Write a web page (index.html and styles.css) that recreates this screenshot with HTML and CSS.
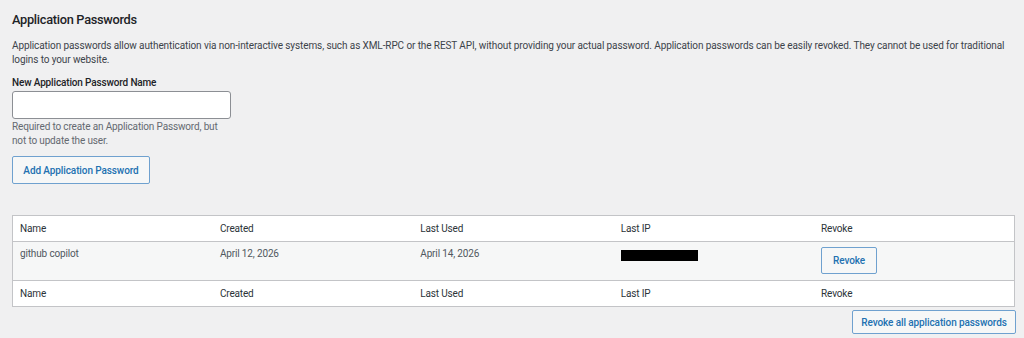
FILE: index.html
```html
<!DOCTYPE html>
<html>
<head>
<meta charset="utf-8">
<link rel="stylesheet" href="styles.css">
</head>
<body>
<div class="wrap">
  <h2 class="title">Application Passwords</h2>
  <p class="desc">Application passwords allow authentication via non-interactive systems, such as XML-RPC or the REST API, without providing your actual password. Application passwords can be easily revoked. They cannot be used for traditional logins to your website.</p>
  <div class="field">
    <label class="label">New Application Password Name</label>
    <input class="input" type="text">
    <p class="help">Required to create an Application Password, but<br>not to update the user.</p>
  </div>
  <button class="btn btn-add">Add Application Password</button>
  <table class="tbl">
    <thead>
      <tr><th>Name</th><th>Created</th><th>Last Used</th><th>Last IP</th><th>Revoke</th></tr>
    </thead>
    <tbody>
      <tr>
        <td>github copilot</td>
        <td>April 12, 2026</td>
        <td>April 14, 2026</td>
        <td><span class="redact"></span></td>
        <td><button class="btn btn-revoke">Revoke</button></td>
      </tr>
    </tbody>
    <tfoot>
      <tr><th>Name</th><th>Created</th><th>Last Used</th><th>Last IP</th><th>Revoke</th></tr>
    </tfoot>
  </table>
  <div class="actions">
    <button class="btn btn-all">Revoke all application passwords</button>
  </div>
</div>
</body>
</html>
```
FILE: styles.css
```css
html, body {
  margin: 0;
  padding: 0;
  background: #f0f0f1;
}
body {
  font-family: "Roboto", "Liberation Sans", sans-serif;
  color: #3c434a;
  font-size: 10px;
  letter-spacing: -0.15px;
}
.wrap {
  padding: 0 8px 0 12px;
}
.title {
  margin: 0;
  padding-top: 12px;
  font-size: 12.8px;
  font-weight: 500;
  letter-spacing: -0.3px;
  color: #1d2327;
  line-height: 16px;
}
.desc {
  margin: 11px 0 0;
  line-height: 14px;
  letter-spacing: -0.1px;
  color: #3c434a;
}
.field {
  margin-top: 9px;
}
.label {
  display: block;
  font-weight: 500;
  color: #1d2327;
  line-height: 14px;
}
.input {
  display: block;
  box-sizing: border-box;
  width: 219px;
  height: 28px;
  margin: 1px 0 0;
  border: 1px solid #8c8f94;
  border-radius: 3px;
  background: #fff;
}
.help {
  margin: 1px 0 0;
  line-height: 14px;
  color: #646970;
}
.btn {
  font-family: inherit;
  font-size: 10px;
  letter-spacing: -0.1px;
  font-weight: 500;
  color: #2271b1;
  background: #f6f7f7;
  border: 1px solid #6fa1cf;
  border-radius: 2px;
  white-space: nowrap;
  cursor: pointer;
}
.btn-add {
  display: block;
  margin-top: 8px;
  width: 138px;
  height: 28px;
  padding: 0;
}
.tbl {
  margin-top: 31px;
  width: 1003px;
  border-collapse: collapse;
  table-layout: fixed;
  border: 1px solid #c3c4c7;
  background: #fff;
}
.tbl th {
  font-weight: 400;
  text-align: left;
  color: #2c3338;
  height: 25px;
  padding: 0 7px;
}
.tbl thead th {
  border-bottom: 1px solid #c3c4c7;
}
.tbl tfoot th {
  border-top: 1px solid #c3c4c7;
}
.tbl tbody tr {
  background: #f6f7f7;
}
.tbl td {
  vertical-align: top;
  height: 39px;
  box-sizing: border-box;
  padding: 5px 7px 0;
  line-height: 13px;
  color: #50575e;
}
.redact {
  display: block;
  width: 77px;
  height: 11px;
  background: #000;
  margin-top: 3px;
}
.btn-revoke {
  display: block;
  width: 56px;
  height: 27px;
  padding: 0;
  margin-top: 0;
}
.actions {
  display: flex;
  justify-content: flex-end;
  width: 1004px;
  margin-top: 3px;
}
.btn-all {
  width: 164px;
  height: 24px;
  padding: 0;
}
```
